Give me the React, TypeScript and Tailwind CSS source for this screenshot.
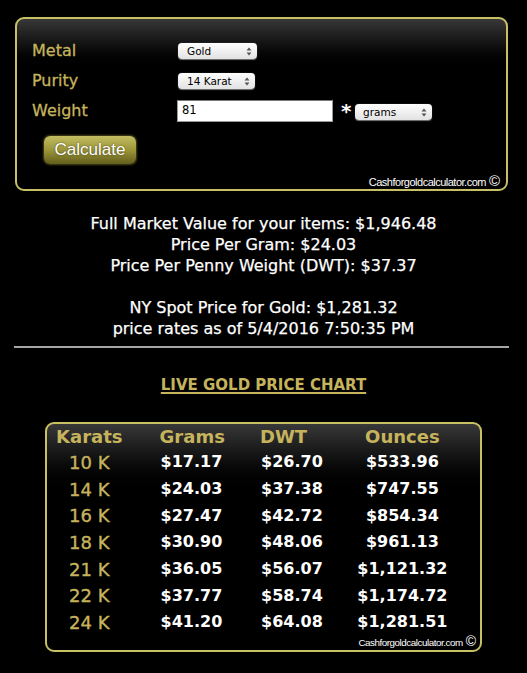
import React from "react";

const Arrows = () => (
  <svg width="6" height="9" viewBox="0 0 6 9" className="shrink-0">
    <path d="M3 0.5 L5.5 3.5 L0.5 3.5 Z" fill="#555" />
    <path d="M3 8.5 L5.5 5.5 L0.5 5.5 Z" fill="#555" />
  </svg>
);

const Select = ({ label, w, pl = "pl-[9px]" }: { label: string; w: string; pl?: string }) => (
  <div
    className={`${w} h-[16px] rounded-[4px] bg-gradient-to-b from-white to-[#e2e2e2] shadow-[0_0.5px_1px_#777] flex items-center justify-between ${pl} pr-[5px] text-[10.5px] leading-none text-black`}
  >
    <span>{label}</span>
    <Arrows />
  </div>
);

const Footer = ({ small = false }: { small?: boolean }) => (
  <div className="flex items-center justify-end text-white">
    <span
      className={`font-['Liberation_Sans',Arial,sans-serif] leading-none ${
        small ? "text-[9.8px] tracking-[-0.45px]" : "text-[11px] tracking-[-0.5px]"
      }`}
    >
      Cashforgoldcalculator.com
    </span>
    <span
      className={`font-['Liberation_Sans',Arial,sans-serif] leading-none ml-[3px] -mt-[3px] ${
        small ? "text-[14px]" : "text-[15px]"
      }`}
    >
      ©
    </span>
  </div>
);

const rows = [
  ["10 K", "$17.17", "$26.70", "$533.96"],
  ["14 K", "$24.03", "$37.38", "$747.55"],
  ["16 K", "$27.47", "$42.72", "$854.34"],
  ["18 K", "$30.90", "$48.06", "$961.13"],
  ["21 K", "$36.05", "$56.07", "$1,121.32"],
  ["22 K", "$37.77", "$58.74", "$1,174.72"],
  ["24 K", "$41.20", "$64.08", "$1,281.51"],
];

export default function App() {
  return (
    <div className="w-[527px] h-[673px] bg-black overflow-hidden font-['DejaVu_Sans',Verdana,sans-serif]">
      <div className="pt-[17px] pl-[15px]">
        <div className="w-[493px] h-[174px] rounded-[9px] border-2 border-[#c7c163] bg-gradient-to-b from-[#383838] via-black via-[32%] to-black flex flex-col pl-[15px] pt-[17px] pr-[6px] pb-[1px]">
          <div className="flex items-center h-[30px]">
            <div className="w-[146px] text-[16px] text-[#c6b45d] [-webkit-text-stroke:0.3px_#c6b45d]">Metal</div>
            <Select label="Gold" w="w-[79px]" />
          </div>
          <div className="flex items-center h-[30px]">
            <div className="w-[146px] text-[16px] text-[#c6b45d] [-webkit-text-stroke:0.3px_#c6b45d]">Purity</div>
            <Select label="14 Karat" w="w-[77px]" />
          </div>
          <div className="flex items-center h-[30px]">
            <div className="w-[145px] text-[16px] text-[#c6b45d] [-webkit-text-stroke:0.3px_#c6b45d]">Weight</div>
            <div className="w-[156px] h-[22px] bg-white border border-[#9a9a9a] border-t-[#7a7a7a] flex items-center pl-[4px] text-[11.5px] text-black">
              81
            </div>
            <div className="ml-[8px] w-[10px] self-start mt-[5px] text-white font-bold text-[20px] leading-none">*</div>
            <div className="ml-[4px] mt-[2px]">
              <Select label="grams" w="w-[77px]" pl="pl-[8px]" />
            </div>
          </div>
          <div className="ml-[12px] mt-[10px] w-[92px] h-[28px] rounded-[6px] bg-gradient-to-b from-[#c4be62] via-[#9c9638] to-[#625e1c] shadow-[0_0_2px_1px_rgba(120,115,40,0.6)] flex items-center justify-center text-white text-[17px] font-['Liberation_Sans',Arial,sans-serif] [text-shadow:0_0_2px_rgba(0,0,0,0.6)]">
            Calculate
          </div>
          <div className="mt-auto">
            <Footer />
          </div>
        </div>
      </div>

      <div className="mt-[22px] text-center text-white text-[16px] leading-[21px] [-webkit-text-stroke:0.25px_white]">
        <div>Full Market Value for your items: $1,946.48</div>
        <div>Price Per Gram: $24.03</div>
        <div>Price Per Penny Weight (DWT): $37.37</div>
        <div className="h-[21px]" />
        <div>NY Spot Price for Gold: $1,281.32</div>
        <div>price rates as of 5/4/2016 7:50:35 PM</div>
      </div>

      <div className="mt-[7px] ml-[14px] w-[495px] h-[2px] bg-[#a5a5a5]" />

      <div className="mt-[27px] text-center leading-[20px]">
        <span className="text-[15px] font-bold text-[#c6b45d] underline decoration-2 underline-offset-2">
          LIVE GOLD PRICE CHART
        </span>
      </div>

      <div className="mt-[27px] ml-[45px] w-[437px] h-[230px] rounded-[9px] border-2 border-[#c7c163] bg-gradient-to-b from-[#383838] via-black via-[32%] to-black flex flex-col pl-0 pr-[4px]">
        <div className="flex items-center h-[25px] text-[18px] font-bold text-[#c6b45d]">
          <div className="w-[85px] text-center">Karats</div>
          <div className="w-[129px] pl-[28px]">Grams</div>
          <div className="w-[69px]">DWT</div>
          <div className="w-[148px] text-center">Ounces</div>
        </div>
        {rows.map((r) => (
          <div key={r[0]} className="flex items-center h-[26.7px]">
            <div className="w-[85px] text-center text-[18px] text-[#c6b45d] [-webkit-text-stroke:0.35px_#c6b45d]">{r[0]}</div>
            <div className="w-[129px] pl-[29px] text-[16px] font-bold text-white">{r[1]}</div>
            <div className="w-[69px] pl-[1px] text-[16px] font-bold text-white">{r[2]}</div>
            <div className="w-[148px] text-center text-[16px] font-bold text-white">{r[3]}</div>
          </div>
        ))}
        <div className="h-[14px] flex items-center justify-end">
          <Footer small />
        </div>
      </div>
    </div>
  );
}
